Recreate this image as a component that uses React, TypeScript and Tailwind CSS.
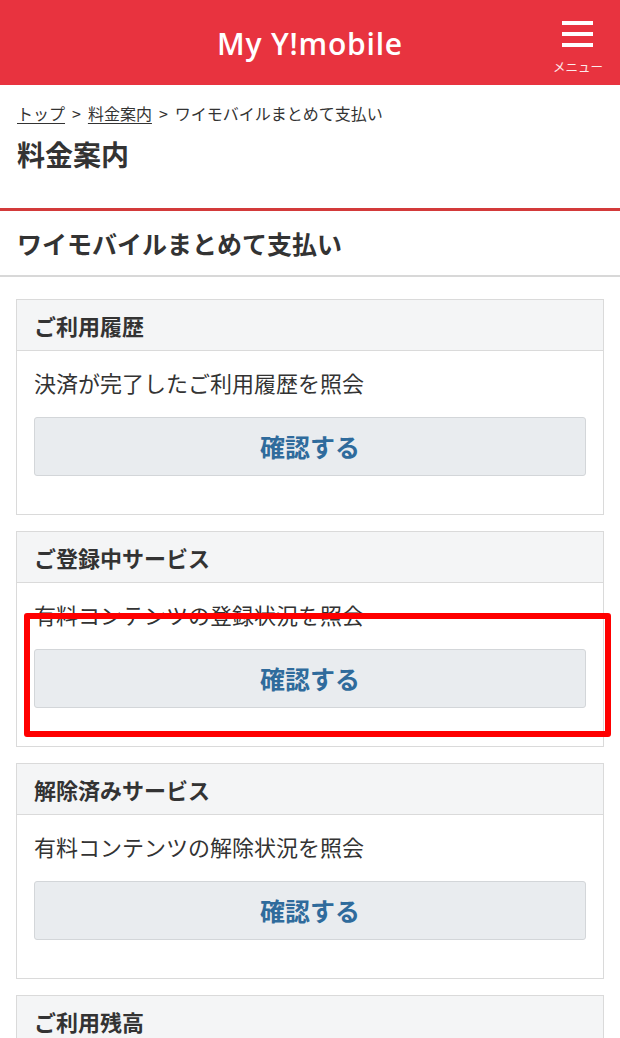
import React from "react";

const jp = { fontFamily: '"Noto Sans CJK JP", "Noto Sans", sans-serif' };

type CardProps = { title: string; desc?: string; highlight?: boolean; partial?: boolean };

function Card({ title, desc, highlight, partial }: CardProps) {
  return (
    <div className="relative border border-[#dadada] bg-white">
      <div className="h-[51px] flex items-center px-[17px] bg-[#f4f5f6] border-b border-[#dadada]">
        <span className="text-[22px] font-bold text-[#333] leading-none">{title}</span>
      </div>
      {!partial && (
        <div className="px-[17px] pt-[15px] pb-[38px]">
          <p className="text-[22px] leading-[32px] text-[#333]">{desc}</p>
          <button className="mt-[19px] w-full h-[59px] rounded-[3px] bg-[#e9ecef] border border-[#d3d6d9] flex items-center justify-center">
            <span className="text-[25px] font-bold text-[#2f6b9c]">確認する</span>
          </button>
        </div>
      )}
      {highlight && (
        <div className="absolute left-[7px] top-[81px] w-[587px] h-[124px] border-[6px] border-[#ff0000] rounded-[3px] pointer-events-none" />
      )}
    </div>
  );
}

export default function App() {
  return (
    <div className="w-[620px] h-[1038px] overflow-hidden bg-white" style={jp}>
      <header className="h-[85px] bg-[#e8333f] grid grid-cols-[1fr_auto_1fr] items-center">
        <div />
        <div
          className="text-white text-[30px] font-semibold tracking-[0.8px] pt-[1px]"
          style={{ fontFamily: '"Open Sans", sans-serif' }}
        >
          My Y!mobile
        </div>
        <div className="flex justify-end pr-[17px]">
          <div className="flex flex-col items-center pt-[10px]">
            <div className="flex flex-col gap-[7px] w-[31px]">
              <div className="h-[4px] bg-white" />
              <div className="h-[4px] bg-white" />
              <div className="h-[4px] bg-white" />
            </div>
            <span className="text-[12.5px] text-white/90 leading-none mt-[14px]">メニュー</span>
          </div>
        </div>
      </header>

      <div className="px-[17px] pt-[17px] h-[123px]">
        <div className="text-[16px] leading-[22px] text-[#333] flex items-center">
          <span className="underline underline-offset-[3px]">トップ</span>
          <span className="mx-[7px]">&gt;</span>
          <span className="underline underline-offset-[3px]">料金案内</span>
          <span className="mx-[7px]">&gt;</span>
          <span>ワイモバイルまとめて支払い</span>
        </div>
        <h1 className="mt-[12px] text-[28px] leading-[36px] font-semibold text-[#333]">料金案内</h1>
      </div>

      <div className="h-[3px] bg-[#d33a3a]" />

      <div className="h-[66px] flex items-center px-[17px] border-b-2 border-[#d8d8d8]">
        <h2 className="text-[25px] font-bold text-[#333] leading-none">ワイモバイルまとめて支払い</h2>
      </div>

      <div className="px-[16px] pt-[22px] flex flex-col gap-[16px]">
        <Card title="ご利用履歴" desc="決済が完了したご利用履歴を照会" />
        <Card title="ご登録中サービス" desc="有料コンテンツの登録状況を照会" highlight />
        <Card title="解除済みサービス" desc="有料コンテンツの解除状況を照会" />
        <Card title="ご利用残高" partial />
      </div>
    </div>
  );
}
